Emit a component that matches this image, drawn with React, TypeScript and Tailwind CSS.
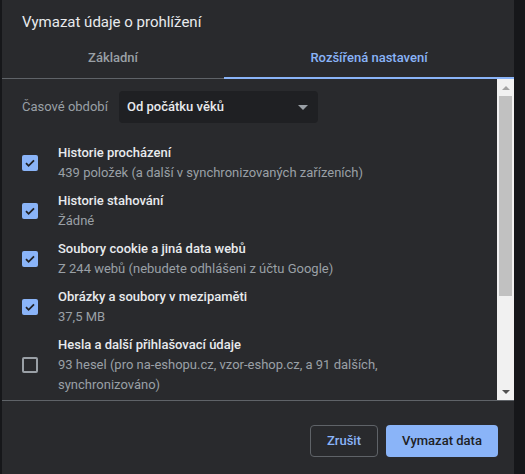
import { useState } from "react";

type Item = {
  title: string;
  lines: string[];
  checked: boolean;
};

const items: Item[] = [
  { title: "Historie procházení", lines: ["439 položek (a další v synchronizovaných zařízeních)"], checked: true },
  { title: "Historie stahování", lines: ["Žádné"], checked: true },
  { title: "Soubory cookie a jiná data webů", lines: ["Z 244 webů (nebudete odhlášeni z účtu Google)"], checked: true },
  { title: "Obrázky a soubory v mezipaměti", lines: ["37,5 MB"], checked: true },
  {
    title: "Hesla a další přihlašovací údaje",
    lines: ["93 hesel (pro na-eshopu.cz, vzor-eshop.cz, a 91 dalších,", "synchronizováno)"],
    checked: false,
  },
];

function Checkbox({ checked, onClick }: { checked: boolean; onClick: () => void }) {
  if (checked) {
    return (
      <button onClick={onClick} className="w-4 h-4 shrink-0 rounded-[2px] bg-[#8ab4f8] flex items-center justify-center">
        <svg width="12" height="12" viewBox="0 0 12 12">
          <path d="M2 6.2 L4.6 8.8 L10 3.4" fill="none" stroke="#202124" strokeWidth="1.8" />
        </svg>
      </button>
    );
  }
  return <button onClick={onClick} className="w-4 h-4 shrink-0 rounded-[2px] border-2 border-[#9aa0a6]" />;
}

export default function App() {
  const [checks, setChecks] = useState<boolean[]>(items.map((i) => i.checked));

  function toggle(idx: number) {
    setChecks((prev) => prev.map((v, i) => (i === idx ? !v : v)));
  }

  return (
    <div
      className="w-[525px] h-[474px] flex bg-[#16171a] overflow-hidden"
      style={{ fontFamily: "Roboto, 'Noto Sans', sans-serif" }}
    >
      <div className="w-[2px] shrink-0" />
      <div className="w-[512px] shrink-0 h-full bg-[#292a2d] flex flex-col">
        {/* title */}
        <div className="h-[40px] pl-5 pt-[12px] text-[15px] leading-[20px] text-[#e8eaed]">
          Vymazat údaje o prohlížení
        </div>

        {/* tabs */}
        <div className="h-[39px] flex relative border-b border-[#5f6368]">
          <div className="w-[222px] flex items-center justify-center text-[13px] font-medium text-[#9aa0a6] pb-[2px]">
            Základní
          </div>
          <div className="flex-1 flex items-center justify-center text-[13px] font-medium text-[#8ab4f8] pb-[2px] relative">
            Rozšířená nastavení
            <div className="absolute left-0 right-0 bottom-[-1px] h-[2px] bg-[#8ab4f8]" />
          </div>
        </div>

        {/* scroll region */}
        <div className="h-[322px] flex border-b border-[#5f6368]">
          <div className="flex-1 overflow-hidden pl-5 pt-[12px]">
            <div className="flex items-center h-[32px]">
              <span className="w-[97px] text-[13px] text-[#9aa0a6]">Časové období</span>
              <div className="w-[199px] h-[32px] rounded-[4px] bg-[#1f2023] flex items-center justify-between pl-2 pr-[10px]">
                <span className="text-[13px] font-medium text-[#e8eaed]">Od počátku věků</span>
                <svg width="10" height="5" viewBox="0 0 10 5">
                  <path d="M0 0 L10 0 L5 5 Z" fill="#9aa0a6" />
                </svg>
              </div>
            </div>

            <div className="mt-[16px] flex flex-col">
              {items.map((it, idx) => (
                <div key={it.title} className="flex items-center py-[4px]">
                  <Checkbox checked={checks[idx]} onClick={() => toggle(idx)} />
                  <div className="ml-[20px] flex flex-col">
                    <span className="text-[13px] leading-[20px] font-medium text-[#e8eaed]">{it.title}</span>
                    {it.lines.map((l) => (
                      <span key={l} className="text-[13px] leading-[20px] text-[#9aa0a6]">{l}</span>
                    ))}
                  </div>
                </div>
              ))}
            </div>
          </div>

          {/* scrollbar */}
          <div className="w-[17px] shrink-0 bg-[#f1f1f1] flex flex-col items-center">
            <div className="h-[17px] flex items-center justify-center">
              <svg width="8" height="4" viewBox="0 0 8 4">
                <path d="M0 4 L8 4 L4 0 Z" fill="#a3a3a3" />
              </svg>
            </div>
            <div className="w-[13px] h-[200px] bg-[#c1c1c1]" />
            <div className="flex-1" />
            <div className="h-[17px] flex items-center justify-center">
              <svg width="8" height="4" viewBox="0 0 8 4">
                <path d="M0 0 L8 0 L4 4 Z" fill="#505050" />
              </svg>
            </div>
          </div>
        </div>

        {/* footer */}
        <div className="flex-1 flex justify-end items-start pt-[24px] pr-4 gap-2">
          <button className="w-[68px] h-[32px] rounded-[4px] border border-[#5f6368] text-[13px] font-medium text-[#8ab4f8]">
            Zrušit
          </button>
          <button className="w-[112px] h-[32px] rounded-[4px] bg-[#8ab4f8] text-[13px] font-medium text-[#202124]">
            Vymazat data
          </button>
        </div>
      </div>
      <div className="flex-1" />
    </div>
  );
}
